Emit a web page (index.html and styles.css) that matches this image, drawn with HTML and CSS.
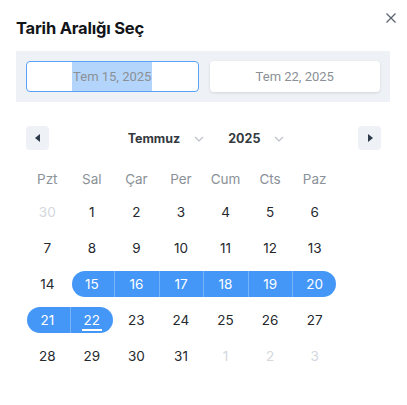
FILE: index.html
```html
<!DOCTYPE html>
<html lang="tr">
<head>
<meta charset="utf-8">
<link rel="stylesheet" href="styles.css">
</head>
<body>
<div class="modal">
  <div class="head">
    <h1 class="title">Tarih Aralığı Seç</h1>
    <button class="close" aria-label="Kapat">
      <svg width="10" height="10" viewBox="0 0 10 10"><path d="M0.5 0.5L9.5 9.5M9.5 0.5L0.5 9.5" stroke="#5c6370" stroke-width="1.3" fill="none"/></svg>
    </button>
  </div>
  <div class="inputs">
    <div class="input active"><span class="sel">Tem 15, 2025</span></div>
    <div class="input">Tem 22, 2025</div>
  </div>
  <div class="cal">
    <div class="nav">
      <button class="navbtn"><svg width="6" height="8" viewBox="0 0 6 8"><path d="M5 0V8L0 4Z" fill="#2d3a4a"/></svg></button>
      <div class="selects">
        <span class="sel-item">Temmuz <svg class="chev" width="10" height="6" viewBox="0 0 10 6"><path d="M1 1L5 5L9 1" stroke="#b8bec6" stroke-width="1.1" fill="none"/></svg></span>
        <span class="sel-item">2025 <svg class="chev" width="10" height="6" viewBox="0 0 10 6"><path d="M1 1L5 5L9 1" stroke="#b8bec6" stroke-width="1.1" fill="none"/></svg></span>
      </div>
      <button class="navbtn"><svg width="6" height="8" viewBox="0 0 6 8"><path d="M1 0V8L6 4Z" fill="#2d3a4a"/></svg></button>
    </div>
    <div class="grid">
      <div class="wd">Pzt</div><div class="wd">Sal</div><div class="wd">Çar</div><div class="wd">Per</div><div class="wd">Cum</div><div class="wd">Cts</div><div class="wd">Paz</div>

      <div class="d out"><span>30</span></div><div class="d"><span>1</span></div><div class="d"><span>2</span></div><div class="d"><span>3</span></div><div class="d"><span>4</span></div><div class="d"><span>5</span></div><div class="d"><span>6</span></div>

      <div class="d"><span>7</span></div><div class="d"><span>8</span></div><div class="d"><span>9</span></div><div class="d"><span>10</span></div><div class="d"><span>11</span></div><div class="d"><span>12</span></div><div class="d"><span>13</span></div>

      <div class="d"><span>14</span></div><div class="d r first"><span>15</span></div><div class="d r"><span>16</span></div><div class="d r"><span>17</span></div><div class="d r"><span>18</span></div><div class="d r"><span>19</span></div><div class="d r last"><span>20</span></div>

      <div class="d r first"><span>21</span></div><div class="d r last"><span class="u">22</span></div><div class="d"><span>23</span></div><div class="d"><span>24</span></div><div class="d"><span>25</span></div><div class="d"><span>26</span></div><div class="d"><span>27</span></div>

      <div class="d"><span>28</span></div><div class="d"><span>29</span></div><div class="d"><span>30</span></div><div class="d"><span>31</span></div><div class="d out"><span>1</span></div><div class="d out"><span>2</span></div><div class="d out"><span>3</span></div>
    </div>
  </div>
</div>
</body>
</html>
```

FILE: styles.css
```css
* { box-sizing: border-box; }
html, body { margin: 0; padding: 0; background: #fff; }
body { font-family: Inter, "Noto Sans", sans-serif; color: #212529; }
.modal { padding: 17px 16px 0 16px; width: 407px; }
.head { display: flex; justify-content: space-between; align-items: flex-start; height: 34px; }
.title { margin: 0; font-size: 16.5px; font-weight: 700; line-height: 22px; color: #111418; letter-spacing: -0.2px; }
.close { border: 0; background: none; padding: 0; width: 10px; height: 10px; display: flex; align-items: center; justify-content: center; margin-top: -4px; margin-right: -5px; }
.inputs { background: #eef1f6; padding: 10px; display: flex; gap: 11px; height: 51px; width: 374px; }
.input { flex: 1; height: 31px; background: #fff; border-radius: 4px; display: flex; align-items: center; justify-content: center; font-family: Roboto, "Liberation Sans", sans-serif; font-size: 13px; color: #8a9096; box-shadow: 0 1px 3px rgba(0,0,0,0.12); }
.input.active { border: 1px solid #5aa2f8; box-shadow: none; align-items: stretch; }
.sel { background: #b4d5fb; display: flex; align-items: center; padding: 0 1px; }
.cal { padding: 24px 10px 0 10px; }
.nav { display: flex; align-items: center; justify-content: space-between; height: 24px; }
.navbtn { width: 23px; height: 24px; border: 0; border-radius: 4px; background: #eef1f6; display: flex; align-items: center; justify-content: center; padding: 0; }
.selects { display: flex; gap: 24px; margin-left: 5px; }
.sel-item { display: flex; align-items: center; gap: 14px; font-size: 12.5px; font-weight: 700; color: #343a40; }
.chev { margin-top: 1px; }
.grid { display: grid; grid-template-columns: repeat(7, 44.57px); grid-auto-rows: 36px; grid-template-rows: 30px; margin: 14px 0 0 -1px; width: 312px; }
.wd { display: flex; align-items: center; justify-content: center; font-size: 13.5px; color: #8a9198; }
.d { display: flex; align-items: center; justify-content: center; font-size: 13.5px; color: #25292e; position: relative; }
.d span { position: relative; z-index: 1; line-height: 20px; }
.d.out { color: #d3d8de; }
.d.r { color: #fff; }
.d.r::before { content: ""; position: absolute; left: 0; right: 0; top: 5px; bottom: 5px; background: #4597f7; border-left: 1px solid rgba(255,255,255,0.28); }
.d.r.first::before { border-left: 0; left: 2px; border-radius: 13px 0 0 13px; }
.d.r.last::before { right: 1px; border-radius: 0 13px 13px 0; }
.u { border-bottom: 2px solid #fff; padding: 0 2px; line-height: 17px !important; margin-top: 2px; }
```
